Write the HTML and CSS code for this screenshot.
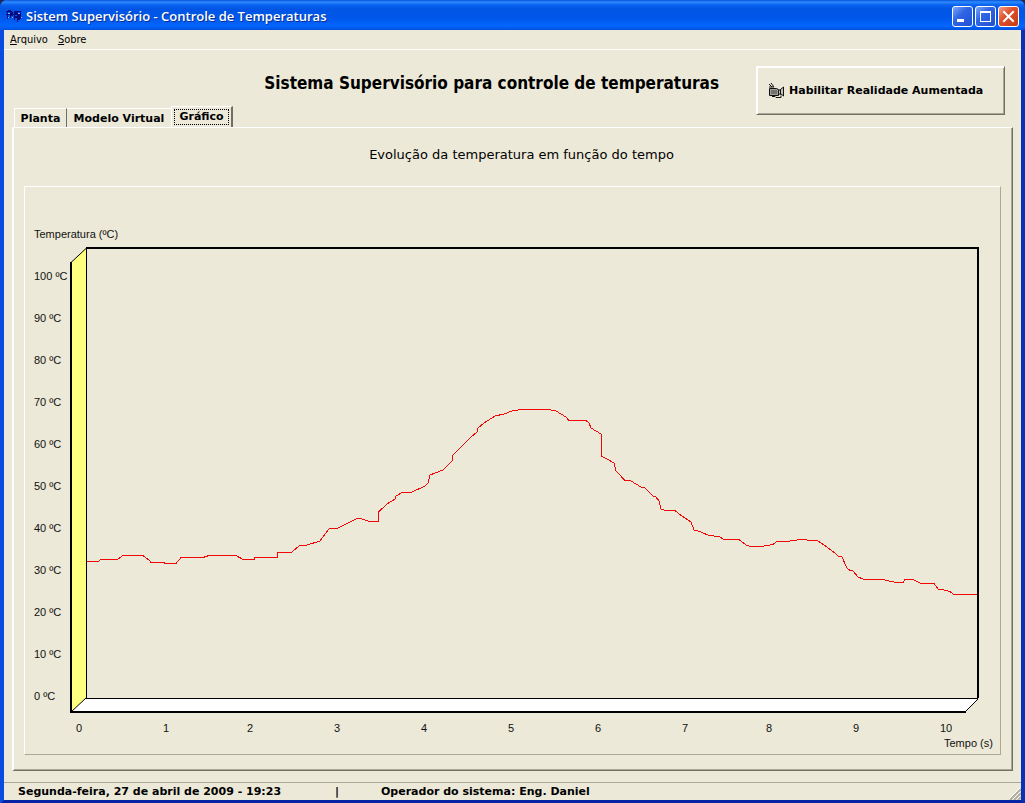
FILE: index.html
```html
<!DOCTYPE html>
<html lang="pt-BR">
<head>
<meta charset="utf-8">
<title>Sistem Supervisório - Controle de Temperaturas</title>
<link rel="stylesheet" href="styles.css">
</head>
<body>
<div class="window">
  <header class="titlebar">
    <svg class="app-icon" width="16" height="16" viewBox="0 0 16 16" shape-rendering="crispEdges" aria-hidden="true">
      <path d="M1 3v8M4 3v7M0 3h6M0 6h6M8 3v9M11 3v6M8 3h7M7 6h8M14 3v8M11 9v5" stroke="#0a0c88" stroke-width="1" fill="none"/>
      <path d="M2 2h3v1h-3zM5 4h2v4h-2zM9 4h2v2h-2zM9 8h2v2h-2zM12 7h2v5h-2z" fill="#0a0c78"/>
      <path d="M2 5h2M6 9h1M12 5h2M2 9h1M15 9h1" stroke="#8fb4ff" stroke-width="1"/>
    </svg>
    <span class="caption">Sistem Supervisório - Controle de Temperaturas</span>
    <div class="controls">
      <button class="control" type="button" aria-label="Minimizar"><svg width="19" height="19" viewBox="0 0 19 19"><path d="M4 12h7v3H4z" fill="#fff"/></svg></button>
      <button class="control" type="button" aria-label="Maximizar"><svg width="19" height="19" viewBox="0 0 19 19"><path d="M4 4h11v11H4zM5 6v8h9V6z" fill="#fff" fill-rule="evenodd"/></svg></button>
      <button class="control control-close" type="button" aria-label="Fechar"><svg width="19" height="19" viewBox="0 0 19 19"><path d="M5 5l9 9M14 5l-9 9" stroke="#fff" stroke-width="2" stroke-linecap="square"/></svg></button>
    </div>
  </header>
  <nav class="menu">
    <button class="menu-item" type="button"><u>A</u>rquivo</button>
    <button class="menu-item" type="button"><u>S</u>obre</button>
  </nav>
  <main class="content">
    <div class="top">
      <div class="top-left">
        <h1 class="heading">Sistema Supervisório para controle de temperaturas</h1>
        <div class="tabs" role="tablist">
          <button class="tab tab-first" type="button" role="tab" aria-selected="false">Planta</button>
          <button class="tab tab-divided" type="button" role="tab" aria-selected="false">Modelo Virtual</button>
          <button class="tab tab-active" type="button" role="tab" aria-selected="true"><span class="tab-focus">Gráfico</span></button>
        </div>
      </div>
      <button class="enable" type="button">
        <svg width="17" height="17" viewBox="0 0 17 17" aria-hidden="true">
          <path d="M1.500 6.500h7l2 1v6h-9z" fill="#a0a09a" stroke="#111"/>
          <path d="M1 2l3 3M3 1l3 4M1 5h5" stroke="#111" fill="none"/>
          <path d="M3 9h6M3 11h6" stroke="#444"/>
          <path d="M10.500 8.500l2-1v5l-2-1zM12.500 7.500l3-2.500v9l-3-2.500z" fill="#c8c6ba" stroke="#111"/>
          <path d="M4 14.500h3l1 1h5v-2" stroke="#111" fill="none"/>
        </svg>
        <span>Habilitar Realidade Aumentada</span>
      </button>
    </div>
    <section class="page" role="tabpanel">
      <h2 class="subtitle">Evolução da temperatura em função do tempo</h2>
      <div class="chart-frame">
        <svg class="chart" viewBox="25 187 975 567" role="img" aria-label="Temperatura em função do tempo">
          <g shape-rendering="crispEdges">
            <path d="M71 262L86 248V698L71 712Z" fill="#ffff80"/>
            <path d="M71 712L86 698H978L965 712Z" fill="#fff"/>
            <path d="M86.500 248V698.500H978" fill="none" stroke="#000"/>
            <path d="M86 248H978V698M71 262V712H966" fill="none" stroke="#000" stroke-width="2"/>
          </g>
          <path d="M71 262.500L86 248.500M71 712L86 698M965 712L978 699" fill="none" stroke="#000"/>
          <polyline class="curve" shape-rendering="crispEdges" points="87,561.5 98,561.5 101,559.5 118,559 123,555.500 143,555.500 150,561 150,562.5 164,562.5 165,563.500 176,563.500 181,557.5 203,557.5 209,555.5 236,555.5 243,559.500 254,559.500 254,557.5 277.500,557.5 277.500,552.5 292,552 299,546 307,545 320,541 329,529 338,528 356,519 360,518.500 370,521.500 378.500,521.500 378.500,512 387,504 395,499 396,496 402,492.500 411,492.500 425,486 428,483 430,475 443,470 452,461 453,455 470,438 477,432 478,428 484,423 495,416 504,414 512,411 521,409.5 548,409.5 556,411 566,417 569,420.500 586,420.5 589,423 591,428 601,434 601.500,456 614,463 616,471 625,480.500 631,481 641,487 645,488 653,496 656,497 659,501 661,509 665,510.500 675,510.500 679,514 691,522 694,530 697,530.500 708,535 720,537 724,539.500 739,539.500 747,545.5 751,546.5 761,546.5 773,544.500 777,541.5 790,541 801,539.5 818,541 824,545 835,553 838,556 842,557 847,568 850,570.500 853,571 858,577 864,579.5 883,579.5 889,581 897,582.5 903,582.5 905,579.5 913,579.5 920,583 934,583.5 938,589 942,589.500 950,591.5 954,594.5 977,594.5"/>
          <g class="labels">
            <text x="34" y="238">Temperatura (ºC)</text>
            <text x="34" y="280">100 ºC</text>
            <text x="34" y="322">90 ºC</text>
            <text x="34" y="364">80 ºC</text>
            <text x="34" y="406">70 ºC</text>
            <text x="34" y="448">60 ºC</text>
            <text x="34" y="490">50 ºC</text>
            <text x="34" y="532">40 ºC</text>
            <text x="34" y="574">30 ºC</text>
            <text x="34" y="616">20 ºC</text>
            <text x="34" y="658">10 ºC</text>
            <text x="34" y="700">0 ºC</text>
            <text x="76" y="732">0</text>
            <text x="163" y="732">1</text>
            <text x="247" y="732">2</text>
            <text x="334" y="732">3</text>
            <text x="421" y="732">4</text>
            <text x="508" y="732">5</text>
            <text x="595" y="732">6</text>
            <text x="682" y="732">7</text>
            <text x="766" y="732">8</text>
            <text x="853" y="732">9</text>
            <text x="940" y="732">10</text>
            <text x="944" y="747">Tempo (s)</text>
          </g>
        </svg>
      </div>
    </section>
  </main>
  <footer class="status">
    <span class="status-date">Segunda-feira, 27 de abril de 2009 - 19:23</span>
    <span class="status-bar">|</span>
    <span class="status-user">Operador do sistema: Eng. Daniel</span>
    <svg class="grip" width="12" height="12" viewBox="0 0 12 12" aria-hidden="true"><path d="M1 12L12 1M5 12L12 5M9 12L12 9" stroke="#b0ad9c" stroke-width="2"/><path d="M0 11L11 0M4 11L11 4M8 11L11 8" stroke="#fff"/></svg>
  </footer>
</div>
</body>
</html>
```
FILE: styles.css
```css
* {
  box-sizing: border-box;
}

body {
  margin: 0;
  background: #1b2a5c;
  color: #000;
  font-family: "DejaVu Sans", Verdana, sans-serif;
  font-size: 11px;
}

button {
  margin: 0;
  padding: 0;
  border: 0;
  background: none;
  color: inherit;
  font: inherit;
}

.window {
  display: flex;
  flex-direction: column;
  min-height: 100vh;
  border: solid;
  border-width: 0 4px 4px;
  border-color: #0a3bd0 #0831b8 #0424a4 #0a4be0;
  border-radius: 7px 7px 0 0;
  background: #ece9d8;
}

.titlebar {
  display: flex;
  align-items: center;
  gap: 4px;
  height: 30px;
  margin: 0 -4px;
  padding: 2px 6px 0;
  border-radius: 7px 7px 0 0;
  background: linear-gradient(#0a52d8 0, #2c8bff 2px, #0a62f0 5px, #0055e5 9px, #0057ea 18px, #0366ff 26px, #0050dc 30px);
}

.caption {
  flex: 1;
  color: #fff;
  font: 600 13px "Open Sans", "Trebuchet MS", sans-serif;
  text-shadow: 1px 1px #0a2f94;
}

.controls {
  display: flex;
  gap: 2px;
}

.control {
  display: grid;
  place-items: center;
  width: 21px;
  height: 21px;
  border: 1px solid #fff;
  border-radius: 3px;
  background: linear-gradient(135deg, #7fa6f8, #2f66e4 40%, #2050d4);
}

.control-close {
  background: linear-gradient(135deg, #f0a088, #e0512c 40%, #c43a14);
}

.menu {
  display: flex;
  gap: 10px;
  height: 20px;
  padding: 0 6px;
  border-bottom: 1px solid #fff;
}

.menu-item {
  font-family: "DejaVu Sans Condensed", Tahoma, sans-serif;
}

.content {
  flex: 1;
  display: flex;
  flex-direction: column;
  padding: 0 8px 11px;
}

.top {
  display: flex;
  align-items: flex-start;
  padding-right: 8px;
}

.top-left {
  flex: 1;
  display: flex;
  flex-direction: column;
}

.heading {
  height: 56px;
  margin: 0;
  padding: 23px 37px 0 0;
  font: bold 17px/20px "DejaVu Sans Condensed", Tahoma, sans-serif;
  text-align: right;
}

.tabs {
  display: flex;
  align-items: flex-end;
  height: 21px;
  padding-left: 2px;
  font-weight: bold;
}

.tab {
  height: 19px;
  border-top: 1px solid #fff;
}

.tab-first {
  width: 52px;
  border-left: 1px solid #fff;
}

.tab-divided {
  width: 105px;
  border-left: 1px solid #716f64;
}

.tab-active {
  width: 62px;
  height: 21px;
  padding: 2px;
  border-right: 2px solid #716f64;
  border-left: 1px solid #fff;
}

.tab-focus {
  display: block;
  border: 1px dotted #000;
  line-height: 14px;
}

.enable {
  display: flex;
  align-items: center;
  gap: 4px;
  min-width: 249px;
  height: 49px;
  margin-top: 16px;
  padding: 0 11px;
  border: solid;
  border-width: 1px;
  border-color: #fff #716f64 #716f64 #fff;
  box-shadow: inset 1px 1px #fff, inset -1px -1px #aca899;
  font-weight: bold;
}

.page {
  flex: 1;
  padding: 18px 11px 15px 10px;
  border: solid;
  border-width: 1px 1px 1px 2px;
  border-color: #fff #716f64 #716f64 #fff;
  box-shadow: inset -1px -1px #aca899;
}

.subtitle {
  margin: 0 0 22px;
  padding-left: 18px;
  font-size: 13px;
  font-weight: normal;
  line-height: 18px;
  text-align: center;
}

.chart-frame {
  border: 1px solid;
  border-color: #fff #aca899 #aca899 #fff;
}

.chart {
  display: block;
  width: 100%;
}

.curve {
  fill: none;
  stroke: #f00808;
}

.labels {
  fill: #111;
  font: 11px "Liberation Sans", Arial, sans-serif;
}

.status {
  display: flex;
  align-items: center;
  height: 18px;
  padding-left: 14px;
  border-top: 1px solid #aca899;
  font-weight: bold;
}

.status-date {
  width: 317px;
}

.status-bar {
  width: 46px;
}

.status-user {
  flex: 1;
}

.grip {
  align-self: flex-end;
}
```
